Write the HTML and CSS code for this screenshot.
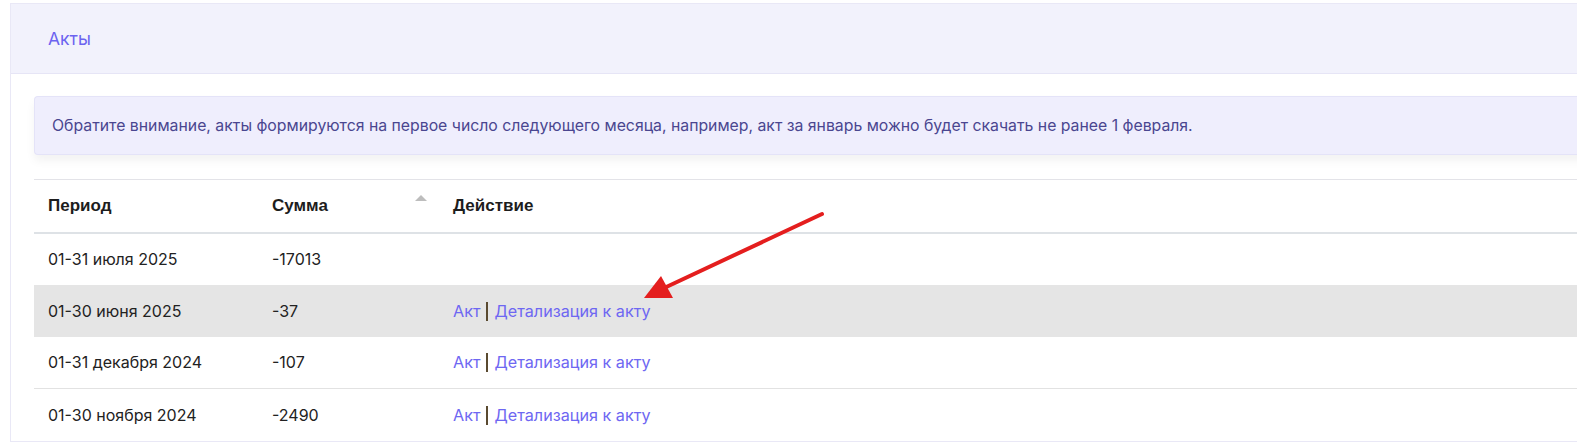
FILE: index.html
```html
<!DOCTYPE html>
<html lang="ru">
<head>
<meta charset="utf-8">
<link rel="stylesheet" href="styles.css">
</head>
<body>
<div class="page">
  <div class="card">
    <div class="card-header">Акты</div>
    <div class="card-body">
      <div class="alert">Обратите внимание, акты формируются на первое число следующего месяца, например, акт за январь можно будет скачать не ранее 1 февраля.</div>
      <table class="acts">
        <thead>
          <tr>
            <th class="c-period">Период</th>
            <th class="c-sum sortable">Сумма<span class="sort-up"></span></th>
            <th class="c-act">Действие</th>
          </tr>
        </thead>
        <tbody>
          <tr><td>01-31 июля 2025</td><td>-17013</td><td></td></tr>
          <tr class="hl"><td>01-30 июня 2025</td><td>-37</td><td><a href="#">Акт</a><span class="sep"></span><a href="#">Детализация к акту</a></td></tr>
          <tr><td>01-31 декабря 2024</td><td>-107</td><td><a href="#">Акт</a><span class="sep"></span><a href="#">Детализация к акту</a></td></tr>
          <tr><td>01-30 ноября 2024</td><td>-2490</td><td><a href="#">Акт</a><span class="sep"></span><a href="#">Детализация к акту</a></td></tr>
        </tbody>
      </table>
    </div>
  </div>
  <svg class="arrow" width="1577" height="442" viewBox="0 0 1577 442">
    <line x1="822" y1="214" x2="662" y2="289" stroke="#e41e1e" stroke-width="4" stroke-linecap="round"/>
    <polygon points="644,298 661,276 673,298" fill="#e41e1e"/>
  </svg>
</div>
</body>
</html>
```
FILE: styles.css
```css
* { box-sizing: border-box; }
html, body { margin: 0; padding: 0; background: #fff; }
body { font-family: Inter, "Noto Sans", sans-serif; color: #222; overflow: hidden; }
.page { position: relative; width: 1577px; height: 442px; padding: 3px 0 0 10px; }
.card {
  width: 1600px;
  border: 1px solid #e9e8f6;
  border-right: none;
  background: #fff;
}
.card-header {
  height: 70px;
  background: #f2f2fc;
  border-bottom: 1px solid #e6e5f6;
  padding: 0 0 0 37px;
  display: flex;
  align-items: center;
  font-size: 17.5px;
  color: #6c63f0;
}
.card-body { padding: 22px 0 0 23px; }
.alert {
  height: 59px;
  background: #efeefd;
  border: 1px solid #e4e3f8;
  border-right: none;
  border-radius: 4px 0 0 4px;
  box-shadow: 0 6px 10px rgba(0, 0, 0, 0.05);
  display: flex;
  align-items: center;
  padding-left: 17px;
  font-size: 15.8px;
  color: #4a4690;
  margin-bottom: 24px;
}
.acts { border-collapse: collapse; width: 1560px; }
.acts th, .acts td { text-align: left; padding: 0 14px; height: 52px; vertical-align: middle; }
.acts thead th {
  font-family: "Liberation Sans", Arial, sans-serif;
  font-weight: bold;
  font-size: 17px;
  color: #1d1d1d;
  border-top: 1px solid #e3e3e8;
  border-bottom: 2px solid #dee2e6;
  height: 53px;
}
.c-period { width: 224px; }
.c-sum { width: 181px; position: relative; }
.sort-up {
  position: absolute;
  right: 12px;
  top: 15px;
  width: 0; height: 0;
  border-left: 6px solid transparent;
  border-right: 6px solid transparent;
  border-bottom: 6px solid #bdbdbd;
}
.acts td { font-size: 16px; color: #222; }
.acts tbody tr:nth-child(3) td { border-bottom: 1px solid #e2e2e2; }
.acts tr.hl td { background: #e5e5e5; }
.acts a { color: #6e67f2; text-decoration: none; font-size: 16.2px; }
.sep {
  display: inline-block;
  width: 2px;
  height: 19px;
  background: #5a4a30;
  margin: 0 6px 0 6px;
  vertical-align: -4px;
}
.arrow { position: absolute; left: 0; top: 0; pointer-events: none; }
```
